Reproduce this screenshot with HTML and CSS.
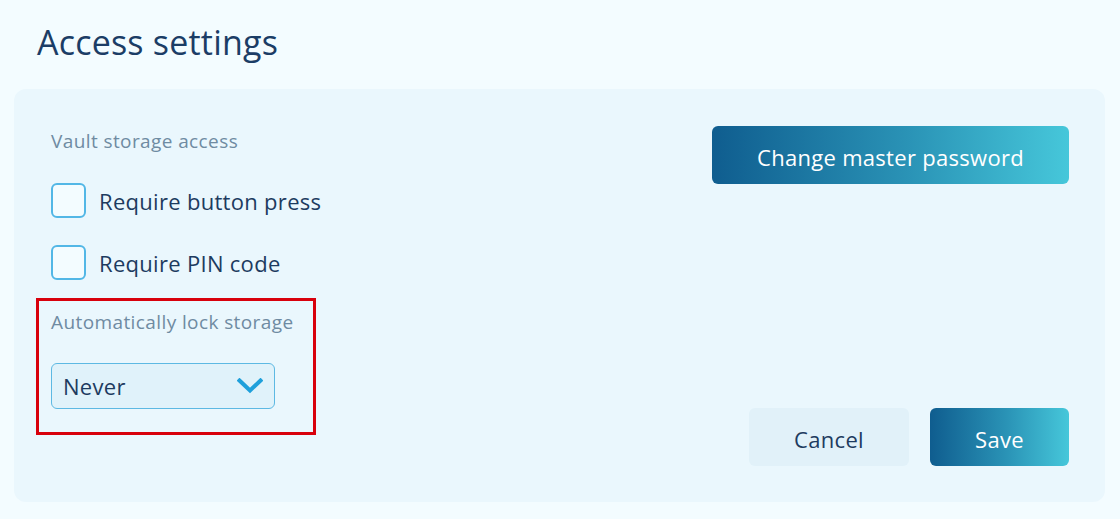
FILE: index.html
```html
<!DOCTYPE html>
<html lang="en">
<head>
<meta charset="utf-8">
<title>Access settings</title>
<link rel="stylesheet" href="styles.css">
</head>
<body>
<h1 class="title">Access settings</h1>
<section class="panel">
  <div class="left">
    <div class="label">Vault storage access</div>
    <label class="check first">
      <span class="box"></span>
      <span class="check-text">Require button press</span>
    </label>
    <label class="check">
      <span class="box"></span>
      <span class="check-text">Require PIN code</span>
    </label>
    <div class="highlight">
      <div class="label">Automatically lock storage</div>
      <div class="select">
        <span class="select-text">Never</span>
        <svg class="chevron" width="26" height="16" viewBox="0 0 26 16"><path d="M2.5 2.5 L13 12.5 L23.5 2.5" fill="none" stroke="#1fa0db" stroke-width="4" stroke-linecap="square"/></svg>
      </div>
    </div>
  </div>
  <div class="right">
    <button class="btn primary wide">Change master password</button>
    <div class="actions">
      <button class="btn secondary">Cancel</button>
      <button class="btn primary save">Save</button>
    </div>
  </div>
</section>
</body>
</html>
```
FILE: styles.css
```css
* { box-sizing: border-box; }
html, body { margin: 0; padding: 0; }
body {
  background: #f3fcff;
  font-family: "Open Sans", "Noto Sans", sans-serif;
  color: #1d3b60;
  width: 1120px;
  height: 519px;
  overflow: hidden;
}
.title {
  margin: 0;
  padding: 19px 0 0 37px;
  height: 89px;
  font-size: 34px;
  font-weight: 400;
  line-height: 46px;
  color: #1b3d66;
  letter-spacing: 0.2px;
}
.panel {
  margin: 0 15px 0 14px;
  height: 413px;
  background: #eaf7fd;
  border-radius: 12px;
  padding: 37px 36px 36px 37px;
  display: flex;
  justify-content: space-between;
}
.left {
  display: flex;
  flex-direction: column;
  width: 300px;
}
.label {
  font-size: 19px;
  line-height: 30px;
  color: #6f8ba2;
  letter-spacing: 0.4px;
  white-space: nowrap;
}
.check {
  display: flex;
  align-items: center;
  gap: 13px;
  height: 35px;
  margin-top: 27px;
}
.check + .check { margin-top: 27px; }
.box {
  width: 35px;
  height: 35px;
  border: 2px solid #52b7e6;
  border-radius: 6px;
  background: #f3fcff;
  flex: none;
}
.check-text {
  font-size: 22px;
  color: #1d3b60;
  letter-spacing: 0.3px;
  white-space: nowrap;
}
.highlight {
  margin: 18px 0 0 -15px;
  width: 280px;
  height: 137px;
  border: 3px solid #d8000c;
  padding: 6px 0 0 12px;
}
.select {
  margin-top: 26px;
  width: 224px;
  height: 46px;
  border: 1px solid #5db9e3;
  border-radius: 6px;
  background: #e0f2fa;
  display: flex;
  align-items: center;
  justify-content: space-between;
  padding: 0 11px 0 11px;
}
.select-text {
  font-size: 22px;
  color: #1d3b60;
  letter-spacing: 0.3px;
}
.chevron { display: block; }
.right {
  display: flex;
  flex-direction: column;
  justify-content: space-between;
  align-items: flex-end;
}
.btn {
  border: none;
  font-family: inherit;
  font-size: 22px;
  letter-spacing: 0.3px;
  height: 58px;
  border-radius: 6px;
  cursor: pointer;
  padding: 3px 0 0;
}
.primary {
  background: linear-gradient(90deg, #0f5d8f 0%, #2a93b6 55%, #46c7da 100%);
  color: #ffffff;
}
.wide { width: 357px; }
.actions {
  display: flex;
  gap: 21px;
}
.secondary {
  width: 160px;
  background: #e1f1f9;
  color: #1d3b60;
}
.save { width: 139px; }
```
